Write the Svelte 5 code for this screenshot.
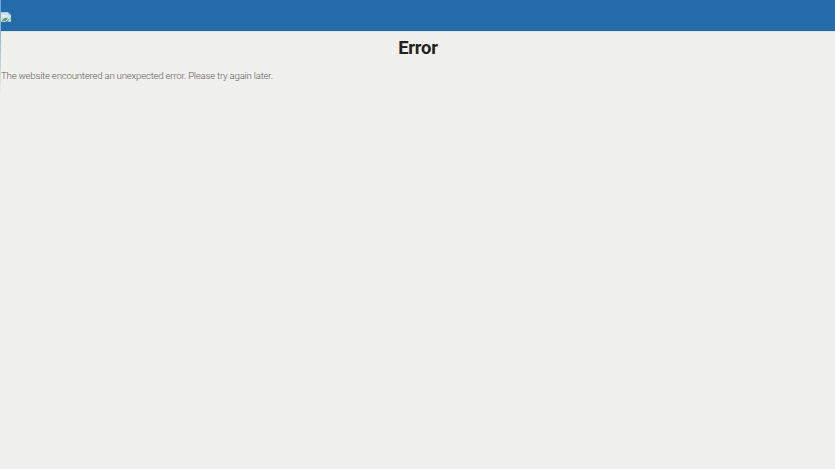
<script lang="ts">
	const title = 'Error';
	const message = 'The website encountered an unexpected error. Please try again later.';
</script>

<svelte:head>
	<title>{title}</title>
</svelte:head>

<div class="page">
	<div class="edge"></div>
	<div class="content">
		<header>
			<svg class="logo" viewBox="0 0 10 10" aria-hidden="true">
				<path d="M0 .3h7l3 3v2.9L7.2 7.5 5.4 9.7H0z" fill="#dfe7ef" />
				<path d="M.8 1h6v2.8h2.4v2L5 9H.8z" fill="#d0e1f6" />
				<path d="M1.5 4.4c0-1.2 1.2-1.8 2-.9 1-.2 1.8.2 1.7.9z" fill="#fff" />
				<path d="M.8 9C1.6 6.8 3.8 5.2 6.8 6L4.8 9z" fill="#58b043" />
				<path d="M6.2 9.7 8 7.6l2-1v3.1z" fill="#d3dce5" />
				<path d="M7 .3v3h3z" fill="#b7c8d9" />
			</svg>
		</header>
		<main>
			<h1>{title}</h1>
			<p>{message}</p>
		</main>
	</div>
</div>

<style>
	:global(body) {
		margin: 0;
		background: #f0f0ec;
	}

	.page {
		display: flex;
		min-height: 100vh;
		background: #f0f0ec;
		font-family: Roboto, 'Liberation Sans', sans-serif;
	}

	.edge {
		width: 1px;
		height: 96px;
		background: linear-gradient(#72a4cf, #8fb5d5 35%, #f0f0ec);
	}

	.content {
		flex: 1;
	}

	header {
		box-sizing: border-box;
		height: 31px;
		padding-top: 12px;
		background: #246baa;
		border-bottom: 1px solid #2467a2;
		box-shadow: 0 1px 0 #dfe5e8;
	}

	.logo {
		display: block;
		width: 10px;
		height: 10px;
	}

	h1 {
		margin: 6px 0 0;
		color: #222;
		font-size: 18.4px;
		font-weight: 700;
		letter-spacing: -0.2px;
		line-height: 22px;
		text-align: center;
	}

	p {
		margin: 10px 0 0;
		color: #606060;
		font-size: 9.7px;
		font-weight: 300;
		letter-spacing: -0.24px;
		line-height: 14px;
	}
</style>
